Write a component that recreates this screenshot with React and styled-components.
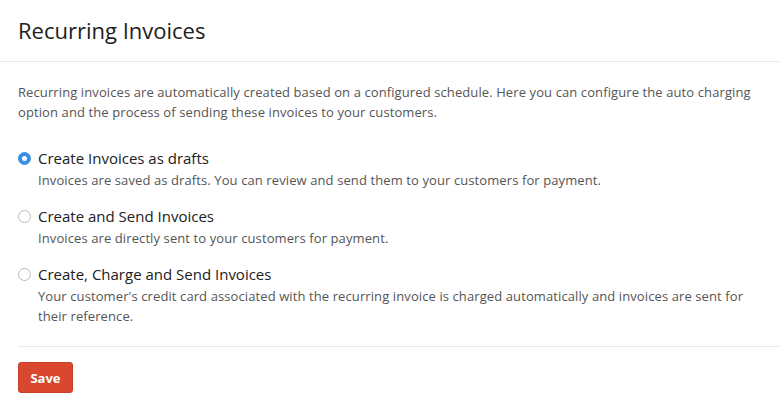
import React, { useState } from "react";
import styled, { createGlobalStyle } from "styled-components";

const Global = createGlobalStyle`
  html, body { margin: 0; padding: 0; background: #fff; }
  body { font-family: "Open Sans", "Liberation Sans", sans-serif; color: #212121; }
  * { box-sizing: border-box; }
`;

const Page = styled.div`
  width: 780px;
  height: 413px;
  background: #fff;
  overflow: hidden;
`;

const Header = styled.div`
  height: 62px;
  padding: 15px 18px 0;
  border-bottom: 1px solid #e8e8e8;
`;

const Title = styled.h1`
  margin: 0;
  font-size: 22px;
  font-weight: 400;
  line-height: 30px;
  color: #212121;
`;

const Body = styled.div`
  padding: 20px 0 0 18px;
`;

const Intro = styled.p`
  margin: 0 0 26px;
  font-size: 13px;
  letter-spacing: 0.1px;
  line-height: 20px;
  color: #555;
  padding-right: 20px;
`;

const Options = styled.div`
  display: flex;
  flex-direction: column;
  gap: 16px;
`;

const Option = styled.label`
  display: grid;
  grid-template-columns: 20px 1fr;
  cursor: pointer;
`;

const Radio = styled.span`
  width: 13px;
  height: 13px;
  margin-top: 4px;
  border-radius: 50%;
  border: 1px solid ${(p) => (p.$checked ? "#3a8ee6" : "#b9b9b9")};
  background: ${(p) => (p.$checked ? "#3a8ee6" : "#fff")};
  display: flex;
  align-items: center;
  justify-content: center;
  &::after {
    content: "";
    width: 5px;
    height: 5px;
    border-radius: 50%;
    background: #fff;
    display: ${(p) => (p.$checked ? "block" : "none")};
  }
`;

const OptionText = styled.div`
  display: flex;
  flex-direction: column;
`;

const OptionLabel = styled.span`
  font-size: 15px;
  line-height: 20px;
  color: #212121;
`;

const OptionDesc = styled.span`
  margin-top: 2px;
  font-size: 13px;
  letter-spacing: 0.1px;
  line-height: 20px;
  color: #555;
  padding-right: 30px;
`;

const Footer = styled.div`
  margin: 20px 0 0 18px;
  padding-top: 15px;
  border-top: 1px solid #e8e8e8;
`;

const SaveButton = styled.button`
  width: 55px;
  height: 31px;
  border: 1px solid #c9402a;
  border-radius: 3px;
  background: #d9472f;
  color: #fff;
  font-family: "Open Sans", "Liberation Sans", sans-serif;
  font-weight: 700;
  font-size: 13px;
  cursor: pointer;
`;

const options = [
  {
    label: "Create Invoices as drafts",
    desc: "Invoices are saved as drafts. You can review and send them to your customers for payment.",
  },
  {
    label: "Create and Send Invoices",
    desc: "Invoices are directly sent to your customers for payment.",
  },
  {
    label: "Create, Charge and Send Invoices",
    desc: "Your customer's credit card associated with the recurring invoice is charged automatically and invoices are sent for their reference.",
  },
];

export default function App() {
  const [sel, setSel] = useState(0);
  return (
    <Page>
      <Global />
      <Header>
        <Title>Recurring Invoices</Title>
      </Header>
      <Body>
        <Intro>
          Recurring invoices are automatically created based on a configured schedule. Here you can configure the auto charging option and the process of sending these invoices to your customers.
        </Intro>
        <Options>
          {options.map((o, i) => (
            <Option key={o.label} onClick={() => setSel(i)}>
              <Radio $checked={sel === i} />
              <OptionText>
                <OptionLabel>{o.label}</OptionLabel>
                <OptionDesc>{o.desc}</OptionDesc>
              </OptionText>
            </Option>
          ))}
        </Options>
      </Body>
      <Footer>
        <SaveButton>Save</SaveButton>
      </Footer>
    </Page>
  );
}
